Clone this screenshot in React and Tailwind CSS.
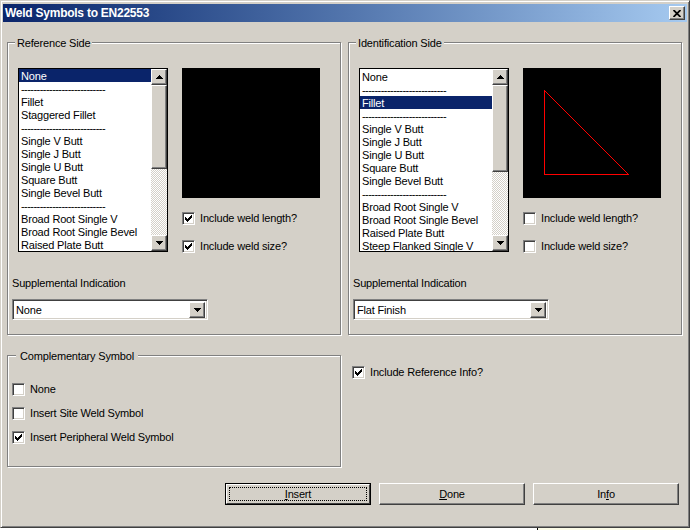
const D = "---------------------------";
const listA = ["None",D,"Fillet","Staggered Fillet",D,"Single V Butt","Single J Butt","Single U Butt","Square Butt","Single Bevel Butt",D,"Broad Root Single V","Broad Root Single Bevel","Raised Plate Butt"];
const listB = ["None",D,"Fillet",D,"Single V Butt","Single J Butt","Single U Butt","Square Butt","Single Bevel Butt",D,"Broad Root Single V","Broad Root Single Bevel","Raised Plate Butt","Steep Flanked Single V"];

function Raised({ className = "", children }) {
  return (
    <div className={"bg-[#d4d0c8] border border-t-white border-l-white border-r-[#404040] border-b-[#404040] shadow-[inset_-1px_-1px_0_#808080] flex items-center justify-center " + className}>
      {children}
    </div>
  );
}

function Check({ checked, label, className = "" }) {
  return (
    <div className={"flex items-center gap-[5px] h-[13px] " + className}>
      <div className="w-[13px] h-[13px] bg-white border border-t-[#808080] border-l-[#808080] border-r-white border-b-white shadow-[inset_1px_1px_0_#404040,inset_-1px_-1px_0_#d4d0c8] flex items-center justify-center shrink-0">
        {checked && (
          <svg width="7" height="7" viewBox="0 0 7 7" shapeRendering="crispEdges">
            <path d="M6 0h1v1h-1z M5 1h2v1h-2z M0 2h1v1h-1z M4 2h3v1h-3z M0 3h2v1h-2z M3 3h3v1h-3z M0 4h5v1h-5z M1 5h3v1h-3z M2 6h1v1h-1z" fill="#000" />
          </svg>
        )}
      </div>
      <span>{label}</span>
    </div>
  );
}

function ArrowBtn({ up }) {
  return (
    <Raised className="w-[16px] h-[16px] shrink-0">
      <svg width="7" height="4" viewBox="0 0 7 4" shapeRendering="crispEdges">
        <path d={up ? "M3 0h1v1h1v1h1v1h1v1h-7v-1h1v-1h1v-1h1z" : "M0 0h7v1h-1v1h-1v1h-1v1h-1v-1h-1v-1h-1v-1h-1z"} fill="#000" />
      </svg>
    </Raised>
  );
}

function List({ items, selected, top, thumb }) {
  return (
    <div className="w-[150px] h-[184px] border border-black flex bg-white overflow-hidden">
      <div className={"flex-1 min-w-0 " + top}>
        {items.map((t, i) => (
          <div key={i} className={"h-[13px] leading-[15px] pl-[2px] whitespace-nowrap " + (t === D ? "tracking-[-0.55px] " : "") + (i === selected ? "bg-[#0a246a] text-white" : "")}>{t}</div>
        ))}
      </div>
      <div className="w-[16px] shrink-0 flex flex-col bg-[repeating-conic-gradient(#d4d0c8_0_25%,#ffffff_0_50%)] bg-[length:2px_2px]">
        <ArrowBtn up />
        <Raised className={"w-[16px] shrink-0 " + thumb} />
        <div className="flex-1" />
        <ArrowBtn />
      </div>
    </div>
  );
}

function Combo({ value }) {
  return (
    <div className="w-[196px] h-[21px] bg-white border border-t-[#808080] border-l-[#808080] border-r-white border-b-white shadow-[inset_1px_1px_0_#404040,inset_-1px_-1px_0_#d4d0c8] flex items-center pl-[3px] pr-[2px]">
      <span className="flex-1 pt-px">{value}</span>
      <Raised className="w-[16px] h-[16px]">
        <svg width="7" height="4" viewBox="0 0 7 4" shapeRendering="crispEdges">
          <path d="M0 0h7v1h-1v1h-1v1h-1v1h-1v-1h-1v-1h-1v-1h-1z" fill="#000" />
        </svg>
      </Raised>
    </div>
  );
}

function Group({ title, className = "", titleClass = "", children }) {
  return (
    <div className={"relative border border-[#808080] shadow-[1px_1px_0_#fff,inset_1px_1px_0_#fff] " + className}>
      <span className={"absolute -top-[6px] h-[13px] leading-[13px] bg-[#d4d0c8] whitespace-nowrap " + titleClass}>{title}</span>
      {children}
    </div>
  );
}

function Side({ title, items, selected, top, thumb, preview, len, size, supp }) {
  return (
    <Group title={title} titleClass="left-[7px] px-[2px]" className="w-[334px] h-[293px] pt-[25px] pl-[4px]">
      <div className="flex pl-[6px]">
        <List items={items} selected={selected} top={top} thumb={thumb} />
        <div className="ml-[14px] flex flex-col">
          <div className="w-[138px] h-[130px] bg-black">{preview}</div>
          <Check className="mt-[14px]" checked={len} label="Include weld length?" />
          <Check className="mt-[15px]" checked={size} label="Include weld size?" />
        </div>
      </div>
      <div className="mt-[24px] h-[13px] leading-[13px]">Supplemental Indication</div>
      <div className="mt-[9px]"><Combo value={supp} /></div>
    </Group>
  );
}

function Btn({ children, def }) {
  return (
    <button className={"w-[146px] h-[22px] flex items-center justify-center " + (def ? "border border-black p-0 bg-[#d4d0c8]" : "bg-[#d4d0c8] border border-t-white border-l-white border-r-[#404040] border-b-[#404040] shadow-[inset_-1px_-1px_0_#808080]")}>
      {def ? (
        <span className="w-full h-full border border-t-white border-l-white border-r-[#404040] border-b-[#404040] p-[2px] block">
          <span className="w-full h-full border border-dotted border-black flex items-center justify-center">{children}</span>
        </span>
      ) : children}
    </button>
  );
}

export default function App() {
  return (
    <div className="w-[690px] h-[530px] bg-white overflow-hidden font-['Liberation_Sans',Arial,sans-serif] text-[11px] tracking-[-0.17px] text-black flex flex-col">
      <div className="h-[528px] shrink-0 bg-[#d4d0c8] border-t border-t-[#d4d0c8] border-b border-b-[#404040] border-l border-l-[#d4d0c8] border-r border-r-[#404040] shadow-[inset_1px_1px_0_#fff,inset_-1px_-1px_0_#808080] p-[2px] flex flex-col">
        <div className="h-[18px] mt-px bg-gradient-to-r from-[#0a246a] to-[#a6caf0] flex items-center justify-between pl-[2px] pr-[2px] shrink-0">
          <span className="text-white font-bold text-[12px] tracking-[-0.25px]">Weld Symbols to EN22553</span>
          <Raised className="w-[16px] h-[14px]">
            <svg width="8" height="7" viewBox="0 0 8 7" stroke="#000" strokeWidth="1.8" fill="none"><path d="M0.5 0 L7.5 7 M7.5 0 L0.5 7" /></svg>
          </Raised>
        </div>
        <div className="flex-1 pl-[4px] pt-[20px] flex flex-col">
          <div className="flex gap-[7px]">
            <Side title="Reference Side" items={listA} selected={0} top="pt-0" thumb="h-[84px]" len size supp="None" />
            <Side title="Identification Side" items={listB} selected={2} top="pt-px" thumb="h-[87px]" supp="Flat Finish"
              preview={
                <svg width="138" height="130" viewBox="0 0 138 130" shapeRendering="crispEdges">
                  <path d="M21.5 22.5 V106.5 H105.5 Z" fill="none" stroke="#f00" />
                </svg>
              } />
          </div>
          <div className="flex gap-[7px] mt-[20px]">
            <Group title="Complementary Symbol" titleClass="left-[8px] px-[4px]" className="w-[334px] h-[112px] pt-[27px] pl-[4px]">
              <Check label="None" />
              <Check className="mt-[11px]" label="Insert Site Weld Symbol" />
              <Check className="mt-[11px]" checked label="Insert Peripheral Weld Symbol" />
            </Group>
            <div className="pl-[4px] pt-[11px]"><Check checked label="Include Reference Info?" /></div>
          </div>
          <div className="flex gap-[8px] mt-[16px] pl-[218px]">
            <Btn def><span><span className="underline">I</span>nsert</span></Btn>
            <Btn><span><span className="underline">D</span>one</span></Btn>
            <Btn><span>In<span className="underline">f</span>o</span></Btn>
          </div>
        </div>
      </div>
      <div className="flex-1 flex">
        <div className="w-[537px]" />
        <div className="w-px bg-black" />
        <div className="flex-1 bg-[#fcfce8]" />
      </div>
    </div>
  );
}
